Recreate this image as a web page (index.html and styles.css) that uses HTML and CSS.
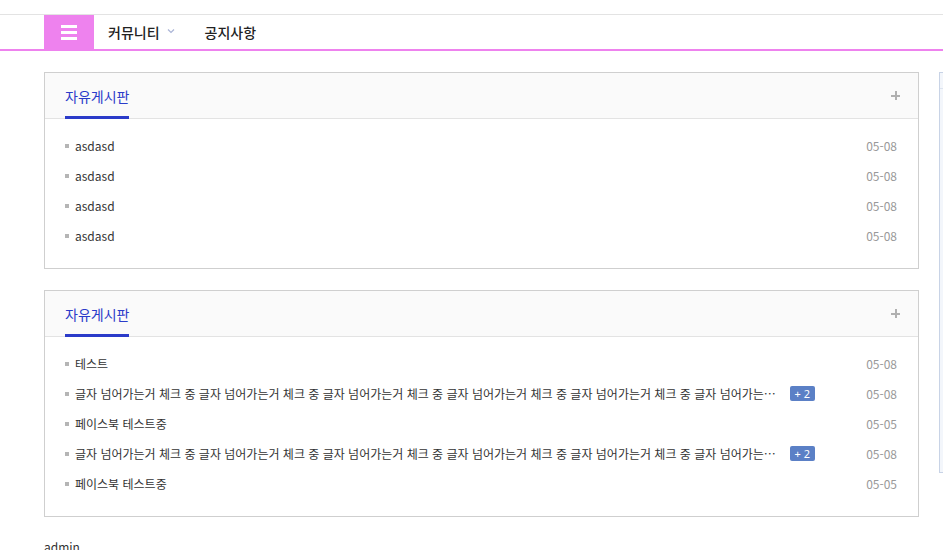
FILE: index.html
```html
<!DOCTYPE html>
<html lang="ko">
<head>
<meta charset="utf-8">
<title>커뮤니티</title>
<link rel="stylesheet" href="styles.css">
</head>
<body>
<header class="topbar">
  <nav class="nav">
    <button class="menu-btn" aria-label="메뉴">
      <span></span><span></span><span></span>
    </button>
    <a class="nav-item" href="#">커뮤니티
      <svg class="chev" width="8" height="6" viewBox="0 0 8 6"><path d="M1 1.5 L4 4.5 L7 1.5" fill="none" stroke="#aab4d6" stroke-width="1.2"/></svg>
    </a>
    <a class="nav-item" href="#">공지사항</a>
  </nav>
</header>

<div class="layout">
  <main class="main">
    <section class="panel">
      <div class="panel-head">
        <h2 class="panel-title">자유게시판</h2>
        <span class="plus"></span>
      </div>
      <ul class="list">
        <li class="row"><span class="dot"></span><span class="subject"><span class="subject-text">asdasd</span></span><span class="date">05-08</span></li>
        <li class="row"><span class="dot"></span><span class="subject"><span class="subject-text">asdasd</span></span><span class="date">05-08</span></li>
        <li class="row"><span class="dot"></span><span class="subject"><span class="subject-text">asdasd</span></span><span class="date">05-08</span></li>
        <li class="row"><span class="dot"></span><span class="subject"><span class="subject-text">asdasd</span></span><span class="date">05-08</span></li>
      </ul>
    </section>

    <section class="panel">
      <div class="panel-head">
        <h2 class="panel-title">자유게시판</h2>
        <span class="plus"></span>
      </div>
      <ul class="list">
        <li class="row"><span class="dot"></span><span class="subject"><span class="subject-text">테스트</span></span><span class="date">05-08</span></li>
        <li class="row"><span class="dot"></span><span class="subject"><span class="subject-text">글자 넘어가는거 체크 중 글자 넘어가는거 체크 중 글자 넘어가는거 체크 중 글자 넘어가는거 체크 중 글자 넘어가는거 체크 중 글자 넘어가는거 체크 중 글자 넘어가는거 체크 중</span><span class="badge">+ 2</span></span><span class="date">05-08</span></li>
        <li class="row"><span class="dot"></span><span class="subject"><span class="subject-text">페이스북 테스트중</span></span><span class="date">05-05</span></li>
        <li class="row"><span class="dot"></span><span class="subject"><span class="subject-text">글자 넘어가는거 체크 중 글자 넘어가는거 체크 중 글자 넘어가는거 체크 중 글자 넘어가는거 체크 중 글자 넘어가는거 체크 중 글자 넘어가는거 체크 중 글자 넘어가는거 체크 중</span><span class="badge">+ 2</span></span><span class="date">05-08</span></li>
        <li class="row"><span class="dot"></span><span class="subject"><span class="subject-text">페이스북 테스트중</span></span><span class="date">05-05</span></li>
      </ul>
    </section>

    <p class="user">admin</p>
  </main>
  <aside class="side">
    <div class="side-head"></div>
  </aside>
</div>
</body>
</html>
```

FILE: styles.css
```css
* { box-sizing: border-box; }
html, body { margin: 0; padding: 0; }
body {
  font-family: "Noto Sans CJK KR", "Noto Sans", sans-serif;
  font-size: 12px;
  color: #333;
  background: #fff;
  overflow: hidden;
}
.topbar {
  margin-top: 14px;
  border-top: 1px solid #e3e3e3;
  border-bottom: 2px solid #ee82ee;
}
.nav {
  display: flex;
  align-items: center;
  height: 34px;
  padding-left: 44px;
}
.menu-btn {
  width: 50px;
  height: 34px;
  border: 0;
  padding: 0;
  background: #ee82ee;
  display: flex;
  flex-direction: column;
  align-items: center;
  justify-content: center;
  gap: 3px;
}
.menu-btn span {
  display: block;
  width: 16px;
  height: 3px;
  background: #fff;
}
.nav-item {
  display: flex;
  align-items: center;
  gap: 7px;
  padding: 0 14px;
  font-size: 14px;
  font-weight: 500;
  color: #222;
  text-decoration: none;
  margin-right: 2px;
}
.chev { margin-top: -2px; }

.layout {
  display: flex;
  gap: 20px;
  padding: 21px 0 0 44px;
  width: 1200px;
}
.main {
  width: 875px;
  flex: none;
}
.side {
  width: 250px;
  height: 401px;
  flex: none;
  border: 1px solid #c8d3e6;
  background: #f3f6fb;
}
.side-head {
  height: 16px;
  border-bottom: 1px solid #dde4ef;
}

.panel {
  border: 1px solid #cfcfcf;
  margin-bottom: 21px;
}
.panel-head {
  height: 46px;
  display: flex;
  align-items: flex-end;
  justify-content: space-between;
  padding: 0 20px;
  background: #fafafa;
  border-bottom: 1px solid #e3e3e3;
}
.panel-title {
  margin: 0 0 -1px;
  font-size: 14px;
  font-weight: 400;
  color: #2b3bc9;
  line-height: 20px;
  padding-bottom: 10px;
  border-bottom: 3px solid #2b3bc9;
}
.plus {
  position: relative;
  width: 9px;
  height: 9px;
  align-self: center;
  margin-right: -2px;
}
.plus::before, .plus::after {
  content: "";
  position: absolute;
  background: #b0b0b0;
}
.plus::before { left: 0; top: 3.5px; width: 9px; height: 2px; }
.plus::after { left: 3.5px; top: 0; width: 2px; height: 9px; }

.list {
  list-style: none;
  margin: 0;
  padding: 11px 20px 18px;
}
.row {
  display: flex;
  align-items: center;
  height: 30px;
}
.dot {
  width: 4px;
  height: 4px;
  background: #b5b5b5;
  margin-right: 6px;
  flex: none;
  margin-top: 2px;
}
.subject {
  flex: 1;
  min-width: 0;
  display: flex;
  align-items: center;
  padding-right: 2px;
}
.subject-text {
  white-space: nowrap;
  overflow: hidden;
  text-overflow: ellipsis;
  color: #333;
}
.badge {
  flex: none;
  margin-left: 8px;
  background: #5b80c6;
  color: #fff;
  font-size: 11px;
  line-height: 15px;
  padding: 0 5px;
  border-radius: 2px;
  font-family: "Noto Sans", sans-serif;
}
.date {
  flex: none;
  width: 80px;
  text-align: right;
  color: #999;
  margin-right: 1px;
}
.user {
  margin: 20px 0 0;
  font-size: 12px;
  color: #333;
}
```
